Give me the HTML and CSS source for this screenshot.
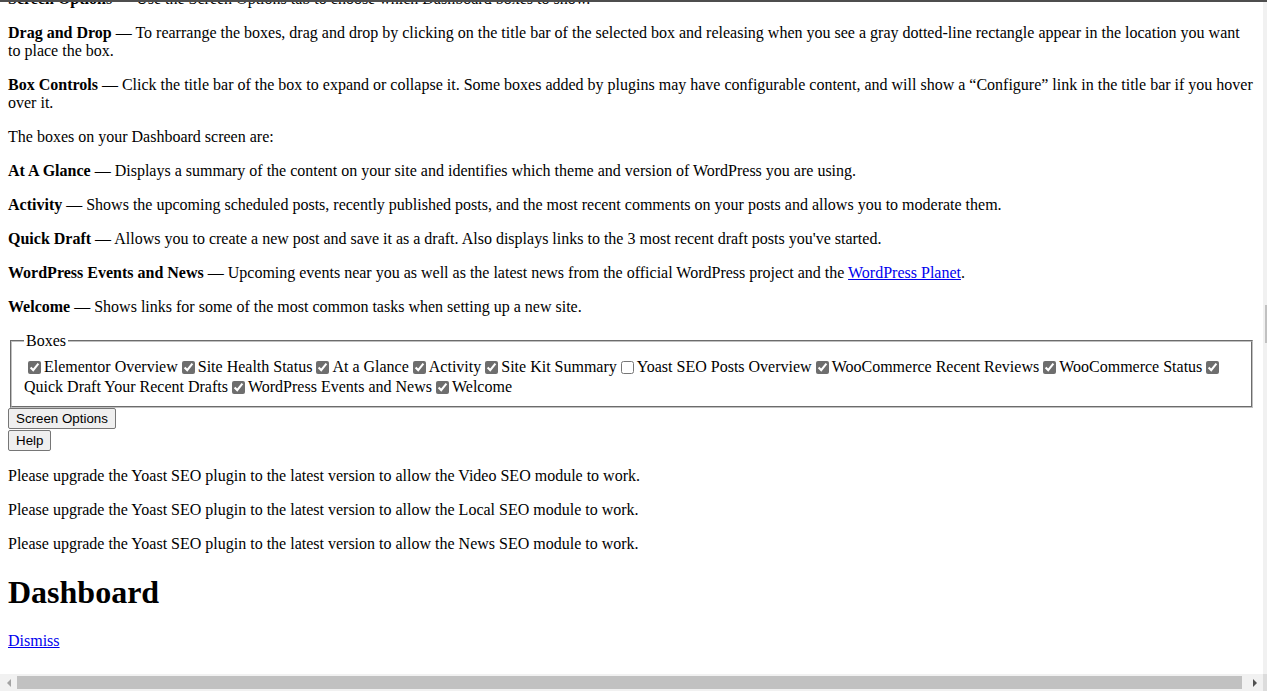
FILE: index.html
```html
<!DOCTYPE html>
<html lang="en">
  <head>
    <meta charset="UTF-8" />
    <meta name="viewport" content="width=device-width, initial-scale=1.0" />
    <title>Dashboard</title>
    <link rel="stylesheet" href="styles.css">
  </head>
  <body>
    <div class="window">
      <div class="top-line"></div>
      <div class="view">
        <div class="page">
          <div class="doc">
            <p><strong>Screen Options</strong> — Use the Screen Options tab to choose which Dashboard boxes to show.</p>
            <p><strong>Drag and Drop</strong> — To rearrange the boxes, drag and drop by clicking on the title bar of the selected box and releasing when you see a gray dotted-line rectangle appear in the location you want to place the box.</p>
            <p><strong>Box Controls</strong> — Click the title bar of the box to expand or collapse it. Some boxes added by plugins may have configurable content, and will show a “Configure” link in the title bar if you hover over it.</p>
            <p>The boxes on your Dashboard screen are:</p>
            <p><strong>At A Glance</strong> — Displays a summary of the content on your site and identifies which theme and version of WordPress you are using.</p>
            <p><strong>Activity</strong> — Shows the upcoming scheduled posts, recently published posts, and the most recent comments on your posts and allows you to moderate them.</p>
            <p><strong>Quick Draft</strong> — Allows you to create a new post and save it as a draft. Also displays links to the 3 most recent draft posts you've started.</p>
            <p><strong>WordPress Events and News</strong> — Upcoming events near you as well as the latest news from the official WordPress project and the <a href="#">WordPress Planet</a>.</p>
            <p><strong>Welcome</strong> — Shows links for some of the most common tasks when setting up a new site.</p>

            <fieldset class="metabox-prefs">
              <legend>Boxes</legend>
              <label><input type="checkbox" checked>Elementor Overview</label><label><input type="checkbox" checked>Site Health Status</label><label><input type="checkbox" checked>At a Glance</label><label><input type="checkbox" checked>Activity</label><label><input type="checkbox" checked>Site Kit Summary</label><label><input type="checkbox">Yoast SEO Posts Overview</label><label><input type="checkbox" checked>WooCommerce Recent Reviews</label><label><input type="checkbox" checked>WooCommerce Status</label><label><input type="checkbox" checked>Quick Draft Your Recent Drafts</label><label><input type="checkbox" checked>WordPress Events and News</label><label><input type="checkbox" checked>Welcome</label>
            </fieldset>

            <div class="screen-meta-link"><button type="button">Screen Options</button></div>
            <div class="screen-meta-link"><button type="button">Help</button></div>

            <div class="notice"><p>Please upgrade the Yoast SEO plugin to the latest version to allow the Video SEO module to work.</p></div>
            <div class="notice"><p>Please upgrade the Yoast SEO plugin to the latest version to allow the Local SEO module to work.</p></div>
            <div class="notice"><p>Please upgrade the Yoast SEO plugin to the latest version to allow the News SEO module to work.</p></div>

            <h1>Dashboard</h1>
            <p><a href="#">Dismiss</a></p>
          </div>
        </div>
        <div class="vbar">
          <div class="vbar-thumb"></div>
        </div>
      </div>
      <div class="hbar">
        <div class="hbar-arrow"><span class="arrow-left"></span></div>
        <div class="hbar-track"><div class="hbar-thumb"></div></div>
        <div class="hbar-arrow"><span class="arrow-right"></span></div>
        <div class="hbar-corner"></div>
      </div>
    </div>
  </body>
</html>
```

FILE: styles.css
```css
html,
body {
  margin: 0;
  height: 100%;
  overflow: hidden;
  background-color: #fff;
}
body {
  font-family: "Liberation Serif", "Times New Roman", serif;
  font-size: 16px;
  color: #000;
}
.window {
  height: 691px;
  display: flex;
  flex-direction: column;
}
.top-line {
  height: 2px;
  flex: none;
  background-color: #4e4e4e;
}
.view {
  flex: 1;
  min-height: 0;
  display: flex;
}
.page {
  flex: 1;
  min-width: 0;
  overflow: hidden;
}
.doc {
  margin-top: -36px;
  padding: 8px;
}
.doc p {
  margin: 16px 0;
}
a {
  color: #0000ee;
}
fieldset {
  margin: 0 2px;
  padding: 6.6px 12px 9px;
  border: 2px groove #c0c0c0;
  line-height: 20px;
}
legend {
  padding: 0 2px;
  line-height: normal;
}
input[type="checkbox"] {
  width: 13px;
  height: 13px;
  margin: 3px 3px 3px 4px;
  accent-color: #6e6e6e;
  vertical-align: -2px;
}
button {
  font-family: "Liberation Sans", Arial, sans-serif;
  font-size: 13.33px;
  padding: 1px 7px;
  margin: 0;
  color: #000;
  background-color: #efefef;
  border: 1px solid #767676;
  border-radius: 2px;
  height: 21px;
}
.screen-meta-link {
  height: 22px;
}
.screen-meta-link + .screen-meta-link {
  height: 21px;
}
h1 {
  font-size: 32px;
  margin: 21.44px 0;
}
.vbar {
  width: 4px;
  flex: none;
  background-color: #f1f1f1;
  padding-top: 303px;
}
.vbar-thumb {
  margin-left: 2px;
  height: 38px;
  background-color: #c1c1c1;
}
.hbar {
  height: 17px;
  flex: none;
  display: flex;
  background-color: #f1f1f1;
}
.hbar-arrow {
  width: 17px;
  flex: none;
  display: flex;
  align-items: center;
  justify-content: center;
}
.arrow-left {
  border-top: 4px solid transparent;
  border-bottom: 4px solid transparent;
  border-right: 4px solid #a3a3a3;
}
.arrow-right {
  border-top: 4px solid transparent;
  border-bottom: 4px solid transparent;
  border-left: 4px solid #505050;
}
.hbar-track {
  flex: 1;
  padding: 2px 4px 2px 0;
}
.hbar-thumb {
  height: 13px;
  background-color: #c1c1c1;
}
.hbar-corner {
  width: 4px;
  flex: none;
  background-color: #dcdcdc;
}
```
